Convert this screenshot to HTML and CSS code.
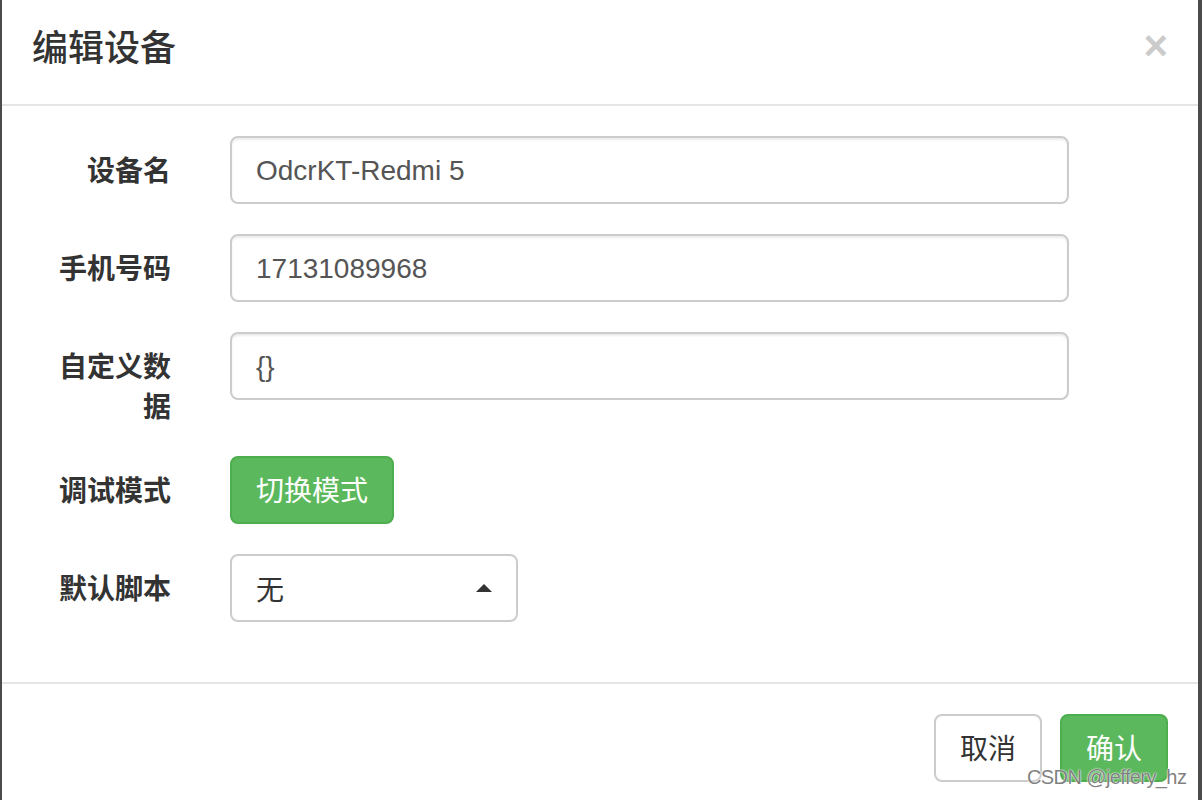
FILE: index.html
```html
<!DOCTYPE html>
<html lang="zh-CN">
<head>
<meta charset="utf-8">
<title>编辑设备</title>
<link rel="stylesheet" href="styles.css">
</head>
<body>
<div class="modal">
  <div class="modal-header">
    <h4 class="modal-title">编辑设备</h4>
    <button class="close" type="button">×</button>
  </div>
  <div class="modal-body">
    <div class="form-group">
      <label class="control-label">设备名</label>
      <div class="control"><input class="form-control" type="text" value="OdcrKT-Redmi 5"></div>
    </div>
    <div class="form-group">
      <label class="control-label">手机号码</label>
      <div class="control"><input class="form-control" type="text" value="17131089968"></div>
    </div>
    <div class="form-group">
      <label class="control-label">自定义数据</label>
      <div class="control"><input class="form-control" type="text" value="{}"></div>
    </div>
    <div class="form-group">
      <label class="control-label">调试模式</label>
      <div class="control"><button class="btn btn-success" type="button">切换模式</button></div>
    </div>
    <div class="form-group">
      <label class="control-label">默认脚本</label>
      <div class="control">
        <div class="select"><span class="select-text">无</span><span class="caret-up"></span></div>
      </div>
    </div>
  </div>
  <div class="modal-footer">
    <button class="btn btn-default" type="button">取消</button>
    <button class="btn btn-success" type="button">确认</button>
  </div>
</div>
<div class="watermark">CSDN @jeffery_hz</div>
</body>
</html>
```
FILE: styles.css
```css
html, body {
  margin: 0;
  padding: 0;
}
body {
  background: #4b4b4b;
  width: 1202px;
  height: 800px;
  overflow: hidden;
  font-family: "Liberation Sans", "Noto Sans CJK SC", sans-serif;
  color: #333;
}
.modal {
  margin-left: 2px;
  width: 1196px;
  height: 800px;
  overflow: hidden;
  background: #fff;
}
.modal-header {
  display: flex;
  justify-content: space-between;
  align-items: flex-start;
  padding: 23px 30px 30px 30px;
  border-bottom: 2px solid #e5e5e5;
}
.modal-title {
  margin: 0;
  font-size: 36px;
  line-height: 51px;
  font-weight: 500;
  color: #333;
}
.close {
  margin-top: 2px;
  padding: 0;
  border: 0;
  background: transparent;
  font-family: "Liberation Sans", sans-serif;
  font-size: 42px;
  font-weight: bold;
  line-height: 42px;
  color: #000;
  opacity: 0.2;
}
.modal-body {
  padding: 30px 0;
}
.form-group {
  display: flex;
  align-items: flex-start;
  margin-bottom: 30px;
}
.control-label {
  box-sizing: border-box;
  flex: 0 0 199px;
  padding: 16px 30px 0 30px;
  margin-bottom: -2px;
  text-align: right;
  font-size: 28px;
  line-height: 40px;
  font-weight: bold;
  color: #333;
}
.control {
  box-sizing: border-box;
  flex: 0 0 898px;
  padding: 0 30px 0 29px;
}
.form-control {
  box-sizing: border-box;
  display: block;
  width: 100%;
  height: 68px;
  margin: 0;
  padding: 2px 24px 0;
  border: 2px solid #ccc;
  border-radius: 8px;
  font-family: "Liberation Sans", "Noto Sans CJK SC", sans-serif;
  font-size: 28px;
  color: #555;
  background: #fff;
  box-shadow: inset 0 2px 2px rgba(0, 0, 0, 0.075);
  outline: none;
}
.btn {
  box-sizing: border-box;
  height: 68px;
  margin: 0;
  padding: 4px 24px 0;
  border: 2px solid transparent;
  border-radius: 8px;
  font-family: "Liberation Sans", "Noto Sans CJK SC", sans-serif;
  font-size: 28px;
  line-height: 60px;
  font-weight: normal;
}
.btn-success {
  background: #5cb85c;
  border-color: #4cae4c;
  color: #fff;
}
.btn-default {
  background: #fff;
  border-color: #ccc;
  color: #333;
}
.select {
  box-sizing: border-box;
  display: flex;
  align-items: center;
  justify-content: space-between;
  width: 288px;
  height: 68px;
  padding: 0 24px;
  border: 2px solid #ccc;
  border-radius: 8px;
  background: #fff;
}
.select-text {
  font-size: 28px;
  color: #333;
}
.caret-up {
  width: 0;
  height: 0;
  border-left: 8px solid transparent;
  border-right: 8px solid transparent;
  border-bottom: 8px solid #333;
}
.modal-footer {
  display: flex;
  justify-content: flex-end;
  gap: 18px;
  padding: 30px;
  border-top: 2px solid #e5e5e5;
}
.watermark {
  position: absolute;
  left: 1027px;
  top: 764px;
  font-family: "Liberation Sans", sans-serif;
  font-size: 20px;
  letter-spacing: -0.6px;
  line-height: 26px;
  color: rgba(105, 105, 105, 0.85);
  text-shadow: 0 0 2px #fff, 0 0 1px #fff;
}
```
